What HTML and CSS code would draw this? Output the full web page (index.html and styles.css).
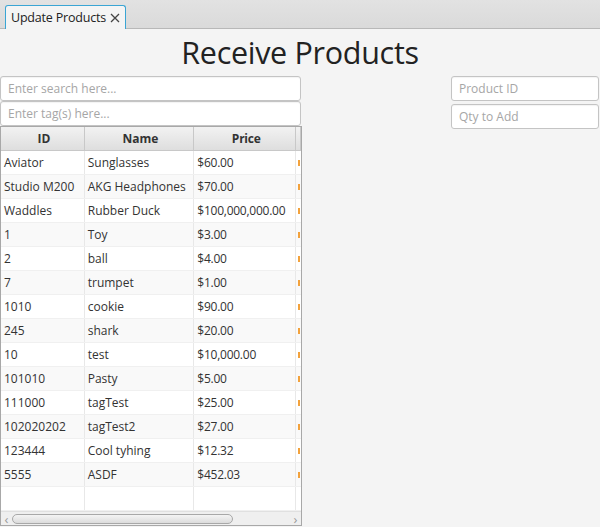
FILE: index.html
```html
<!DOCTYPE html>
<html>
<head>
<meta charset="utf-8">
<link rel="stylesheet" href="styles.css">
</head>
<body>
<div class="tabbar">
  <div class="tab"><span class="tab-label">Update Products</span><svg class="tab-close" width="10" height="10" viewBox="0 0 10 10"><path d="M1 1L9 9M9 1L1 9" stroke="#444" stroke-width="1.3" fill="none"/></svg></div>
</div>
<div class="content">
  <h1 class="title">Receive Products</h1>
  <div class="main">
    <div class="left">
      <div class="field wide">Enter search here...</div>
      <div class="field wide">Enter tag(s) here...</div>
      <div class="table">
        <div class="row head">
          <div class="c c1">ID</div><div class="c c2">Name</div><div class="c c3">Price</div><div class="c c4"></div>
        </div>
        <div class="body">
          <div class="row"><div class="c c1">Aviator</div><div class="c c2">Sunglasses</div><div class="c c3">$60.00</div><div class="c c4"><i></i></div></div>
          <div class="row"><div class="c c1">Studio M200</div><div class="c c2">AKG Headphones</div><div class="c c3">$70.00</div><div class="c c4"><i></i></div></div>
          <div class="row"><div class="c c1">Waddles</div><div class="c c2">Rubber Duck</div><div class="c c3">$100,000,000.00</div><div class="c c4"><i></i></div></div>
          <div class="row"><div class="c c1">1</div><div class="c c2">Toy</div><div class="c c3">$3.00</div><div class="c c4"><i></i></div></div>
          <div class="row"><div class="c c1">2</div><div class="c c2">ball</div><div class="c c3">$4.00</div><div class="c c4"><i></i></div></div>
          <div class="row"><div class="c c1">7</div><div class="c c2">trumpet</div><div class="c c3">$1.00</div><div class="c c4"><i></i></div></div>
          <div class="row"><div class="c c1">1010</div><div class="c c2">cookie</div><div class="c c3">$90.00</div><div class="c c4"><i></i></div></div>
          <div class="row"><div class="c c1">245</div><div class="c c2">shark</div><div class="c c3">$20.00</div><div class="c c4"><i></i></div></div>
          <div class="row"><div class="c c1">10</div><div class="c c2">test</div><div class="c c3">$10,000.00</div><div class="c c4"><i></i></div></div>
          <div class="row"><div class="c c1">101010</div><div class="c c2">Pasty</div><div class="c c3">$5.00</div><div class="c c4"><i></i></div></div>
          <div class="row"><div class="c c1">111000</div><div class="c c2">tagTest</div><div class="c c3">$25.00</div><div class="c c4"><i></i></div></div>
          <div class="row"><div class="c c1">102020202</div><div class="c c2">tagTest2</div><div class="c c3">$27.00</div><div class="c c4"><i></i></div></div>
          <div class="row"><div class="c c1">123444</div><div class="c c2">Cool tyhing</div><div class="c c3">$12.32</div><div class="c c4"><i></i></div></div>
          <div class="row"><div class="c c1">5555</div><div class="c c2">ASDF</div><div class="c c3">$452.03</div><div class="c c4"><i></i></div></div>
          <div class="row empty"><div class="c c1"></div><div class="c c2"></div><div class="c c3"></div><div class="c c4"></div></div>
        </div>
        <div class="hscroll">
          <span class="arrow">‹</span>
          <div class="track"><div class="thumb"></div></div>
          <span class="arrow">›</span>
        </div>
      </div>
    </div>
    <div class="right">
      <div class="field">Product ID</div>
      <div class="field">Qty to Add</div>
    </div>
  </div>
</div>
</body>
</html>
```

FILE: styles.css
```css
html, body {
  margin: 0;
  padding: 0;
  height: 527px;
  overflow: hidden;
  background: #f4f4f4;
  font-family: "Open Sans", "Noto Sans", sans-serif;
  font-size: 12px;
  color: #333;
}
.tabbar {
  height: 28px;
  background: linear-gradient(#e2e2e2, #dadada);
  border-bottom: 1px solid #b8b8b8;
  display: flex;
  align-items: flex-end;
  padding-left: 5px;
}
.tab {
  width: 114px;
  height: 23px;
  margin-bottom: -1px;
  border: 1px solid #3aa5d4;
  border-bottom: none;
  border-radius: 3px 3px 0 0;
  background: #f4f4f4;
  display: flex;
  align-items: center;
  padding-left: 5px;
  box-sizing: content-box;
  font-size: 12.5px;
  color: #222;
}
.tab-label { letter-spacing: -0.2px; }
.tab-close {
  margin-left: 4px;
  flex: none;
}
.content {
  display: flex;
  flex-direction: column;
}
.title {
  margin: 0;
  height: 47px;
  line-height: 46px;
  text-align: center;
  font-weight: normal;
  font-size: 30.5px;
  color: #222;
  letter-spacing: -0.3px;
}
.main {
  display: flex;
  justify-content: space-between;
}
.left {
  width: 302px;
  display: flex;
  flex-direction: column;
}
.right {
  width: 148px;
  margin-right: 1px;
  display: flex;
  flex-direction: column;
  gap: 3px;
}
.field {
  height: 23px;
  line-height: 23px;
  border: 1px solid #c4c4c4;
  border-radius: 3px;
  background: #fff;
  color: #a6a6a6;
  padding-left: 7px;
  font-size: 12px;
  box-shadow: inset 0 1px 1px rgba(0,0,0,0.05);
}
.field.wide {
  width: 292px;
}
.table {
  height: 400px;
  border: 1px solid #a8a8a8;
  box-sizing: border-box;
  background: #fff;
  display: flex;
  flex-direction: column;
  overflow: hidden;
}
.row {
  display: flex;
  height: 24px;
  flex: none;
}
.row:nth-child(even) { background: #f9f9f9; }
.head {
  background: linear-gradient(#f2f2f2, #dedede);
  border-bottom: 1px solid #c8c8c8;
  height: 24px;
  box-sizing: border-box;
  font-weight: bold;
  color: #333;
}
.head .c {
  justify-content: center;
  border-right: 1px solid #c8c8c8;
  font-size: 12px;
}
.c {
  display: flex;
  align-items: center;
  box-sizing: border-box;
  border-right: 1px solid #e8e8e8;
  padding-left: 3px;
  white-space: nowrap;
  overflow: hidden;
  font-size: 12px;
}
.c3 { letter-spacing: -0.25px; }
.body .row { border-bottom: 1px solid #f0f0f0; box-sizing: border-box; }
.c1 { width: 84px; }
.c2 { width: 110px; }
.c3 { width: 102px; }
.c4 { width: 5px; padding-left: 2px; border-right: none; }
.c4 i {
  display: block;
  width: 2px;
  height: 6px;
  background: #f3a23c;
}
.body {
  flex: 1;
  display: flex;
  flex-direction: column;
}
.body .row.empty { background: #fff; flex: 1; }
.hscroll {
  height: 14px;
  flex: none;
  background: #efefef;
  border-top: 1px solid #e0e0e0;
  display: flex;
  align-items: center;
  box-sizing: border-box;
}
.arrow {
  width: 11px;
  text-align: center;
  color: #9a9a9a;
  font-size: 13px;
  line-height: 12px;
}
.track {
  flex: 1;
  height: 10px;
  padding-right: 57px;
}
.thumb {
  height: 8px;
  border: 1px solid #a8a8a8;
  border-radius: 5px;
  background: linear-gradient(#f4f4f4, #dcdcdc);
}
```
